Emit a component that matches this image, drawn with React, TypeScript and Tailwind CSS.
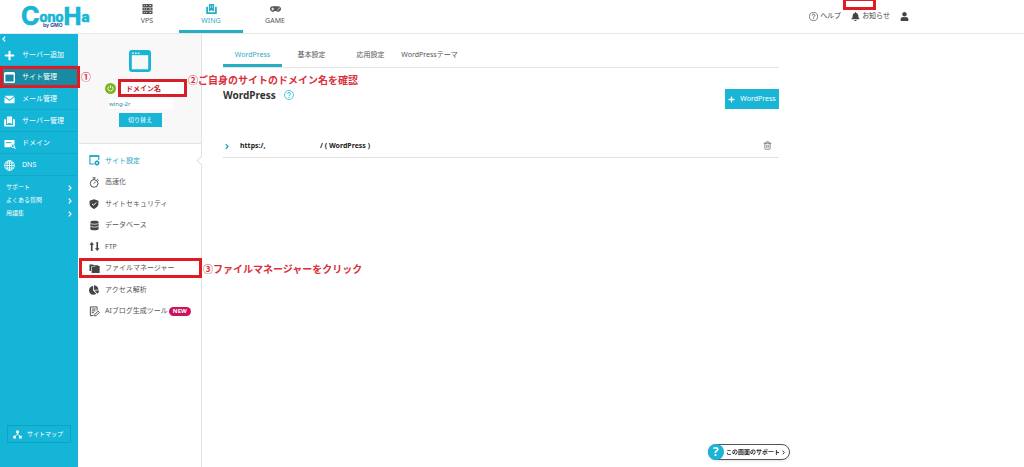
import type { ReactNode } from "react";
import { Trash2 } from "lucide-react";
import { FaBell, FaChartPie, FaGamepad, FaPlus, FaUser } from "react-icons/fa";

type IconProps = { className?: string };

const WindowIcon = ({ className }: IconProps) => (
  <svg viewBox="0 0 22 22" className={className} aria-hidden="true">
    <rect x="1.4" y="1.4" width="19.2" height="19.2" rx="1.6" fill="none" stroke="currentColor" strokeWidth="2.8" />
    <path d="M2 2h18v3.2H2z" fill="currentColor" />
    <path d="M3.2 2.4h1.6V4H3.2zM6 2.4h1.6V4H6zM8.8 2.4h1.6V4H8.8z" fill="#e8f6f9" />
  </svg>
);

const ServerIcon = ({ className }: IconProps) => (
  <svg viewBox="0 0 11 11" className={className} aria-hidden="true">
    <path d="M0 0h11v3.2H0zM0 3.9h11v3.2H0zM0 7.8h11V11H0z" fill="currentColor" />
    <path d="M1.5 1.2h1v1h-1zM4 1.2h1v1H4zM7.5 1.2h2v1h-2zM1.5 5h1v1h-1zM4 5h1v1H4zM7.5 5h2v1h-2zM1.5 8.9h1v1h-1zM4 8.9h1v1H4zM7.5 8.9h2v1h-2z" fill="#ddd" />
  </svg>
);

const WingIcon = ({ className }: IconProps) => (
  <svg viewBox="0 0 12 11" className={className} aria-hidden="true">
    <path d="M3.2 0h5.6v8.2L6 6.8 3.2 8.2zM.2 3h2v6.2h7.6V3h2v8H.2z" fill="currentColor" />
    <path d="M4.6 1.4h.7v3h-.7zM6.7 1.4h.7v3h-.7z" fill="#bfe8f1" />
  </svg>
);

const MailIcon = ({ className }: IconProps) => (
  <svg viewBox="0 0 12 9" className={className} aria-hidden="true">
    <path d="M.5.5h11L6 4.7zM.5 1.8 6 6l5.5-4.2v6.7H.5z" fill="currentColor" />
  </svg>
);

const DomainIcon = ({ className }: IconProps) => (
  <svg viewBox="0 0 12 10" className={className} aria-hidden="true">
    <path d="M.5 1h10v4.2a2.6 2.6 0 0 0-3.8 3H.5z" fill="currentColor" />
    <path d="M2 3.6h5.5" stroke="#14b5d7" strokeWidth="1" />
    <circle cx="8.8" cy="7" r="1.5" fill="none" stroke="currentColor" strokeWidth=".9" />
    <path d="m9.8 8 1.7 1.6" stroke="currentColor" strokeWidth="1.1" />
  </svg>
);

const GlobeIcon = ({ className }: IconProps) => (
  <svg viewBox="0 0 12 12" className={className} fill="none" stroke="currentColor" strokeWidth=".9" aria-hidden="true">
    <circle cx="6" cy="6" r="5.3" />
    <ellipse cx="6" cy="6" rx="2.6" ry="5.3" />
    <path d="M.7 6h10.6M6 .7v10.6M1.5 3.3h9M1.5 8.7h9" />
  </svg>
);

const SiteSettingIcon = ({ className }: IconProps) => (
  <svg viewBox="0 0 12 12" className={className} aria-hidden="true">
    <path d="M5.5 9.8H1V1h9.6v4.5" fill="none" stroke="currentColor" strokeWidth="1.2" />
    <path d="M.5.5h10.7V2H.5z" fill="currentColor" />
    <circle cx="8.7" cy="8.7" r="1.7" fill="none" stroke="currentColor" strokeWidth="1.5" />
    <path d="M8.7 5.5v1.4M8.7 10.4v1.4M5.6 8.7H7M10.4 8.7h1.4M6.5 6.5l1 1M10 10l1 1M10.9 6.5l-1 1M7.4 10l-1 1" stroke="currentColor" strokeWidth="1" />
  </svg>
);

const StopwatchIcon = ({ className }: IconProps) => (
  <svg viewBox="0 0 12 12" className={className} fill="none" stroke="currentColor" strokeWidth="1" aria-hidden="true">
    <circle cx="5.6" cy="7" r="4.2" />
    <path d="M4 .9h3.2M5.6 1v1.8M5.4 7.2l2-2.2M9 2.3l1.6 1.5" />
  </svg>
);

const ShieldIcon = ({ className }: IconProps) => (
  <svg viewBox="0 0 12 12" className={className} aria-hidden="true">
    <path d="M6 .2 11.3 2v3.8c0 2.8-2.2 4.9-5.3 6.1C2.900 10.700.7 8.600.7 5.800V2z" fill="currentColor" />
    <path d="m3.5 5.7 1.9 1.9 3.3-3.5" fill="none" stroke="#fff" strokeWidth="1.2" />
  </svg>
);

const DatabaseIcon = ({ className }: IconProps) => (
  <svg viewBox="0 0 12 12" className={className} aria-hidden="true">
    <path d="M1.5 2.2c0-1.9 9-1.9 9 0v7.600c0 1.900-9 1.900-9 0z" fill="currentColor" />
    <path d="M1.5 3.6c1 1.4 8 1.4 9 0M1.5 6.7c1 1.4 8 1.4 9 0" fill="none" stroke="#fff" strokeWidth=".8" />
  </svg>
);

const FtpIcon = ({ className }: IconProps) => (
  <svg viewBox="0 0 12 12" className={className} aria-hidden="true">
    <path d="M3 1l2.500 3.200H3.900V11H2.100V4.200H.5zM9 11 6.500 7.800h1.600V1h1.800v6.800h1.600z" fill="currentColor" />
  </svg>
);

const FolderIcon = ({ className }: IconProps) => (
  <svg viewBox="0 0 12 12" className={className} aria-hidden="true">
    <path d="M.5 1.500h3.800l1 1H10v1.200H2.200v5H.5z" fill="currentColor" />
    <path d="M2.900 4.400h3.400l1-1h4.300V11H2.900z" fill="currentColor" />
  </svg>
);

const BlogIcon = ({ className }: IconProps) => (
  <svg viewBox="0 0 12 12" className={className} fill="none" stroke="currentColor" strokeWidth="1" aria-hidden="true">
    <path d="M5 10.500H1.500V1h7.300v4M3 3.300h4.300M3 5.300h4M3 7.300h2.500" />
    <path d="m6.200 9.300 3.700-3.700 1.400 1.400-3.700 3.700H6.200z" />
  </svg>
);

const SitemapIcon = ({ className }: IconProps) => (
  <svg viewBox="0 0 10 10" className={className} aria-hidden="true">
    <path d="M3.500.5h3v3h-3zM.3 6.500h3v3h-3zM6.700 6.500h3v3h-3z" fill="currentColor" />
    <path d="M5 3v2M5 4.800 2 7M5 4.800 8 7" stroke="currentColor" strokeWidth=".9" />
  </svg>
);

const HelpIcon = ({ className }: IconProps) => (
  <svg viewBox="0 0 12 12" className={className} fill="none" stroke="currentColor" aria-hidden="true">
    <circle cx="6" cy="6" r="5.4" strokeWidth=".9" />
    <path d="M4.300 4.700c0-2.200 3.500-2.200 3.500 0C7.800 5.800 6 5.900 6 7.300M6 8.300v1.100" strokeWidth="1.1" />
  </svg>
);

const Chevron = ({ className }: IconProps) => (
  <svg viewBox="0 0 4 6" className={className} fill="none" stroke="currentColor" strokeWidth="1.3" aria-hidden="true">
    <path d="M.8.6 3 3 .8 5.400" />
  </svg>
);

const Logo = () => (
  <svg
    viewBox="0 0 72 33"
    role="img"
    aria-label="ConoHa by GMO"
    className="h-[33px] w-[72px] font-['Inter','Noto_Sans',sans-serif] font-bold"
  >
    <text x="0" y="25" fontSize="25" fill="#19b5d5" stroke="#19b5d5" strokeWidth=".7">
      C
      <tspan dy="-3" fontSize="13">ono</tspan>
      <tspan dy="3" fontSize="24">H</tspan>
      <tspan dy="-3" fontSize="14">a</tspan>
    </text>
    <text x="22" y="27" fontSize="5" fill="#1d4f9c">by GMO</text>
  </svg>
);

// red frame drawn over the part being explained
const Frame = ({ className }: IconProps) => (
  <span className={`pointer-events-none absolute z-10 border-[#e01b26] ${className}`} />
);

const Note = ({ className, children }: { className: string; children: ReactNode }) => (
  <span className={`pointer-events-none absolute z-10 text-[10px] leading-3 font-bold whitespace-nowrap text-[#d9303a] ${className}`}>
    {children}
  </span>
);

const services = [
  { label: "VPS", icon: <ServerIcon className="h-[10px] w-[11px]" /> },
  { label: "WING", icon: <WingIcon className="h-[10px] w-[11px]" />, active: true },
  { label: "GAME", icon: <FaGamepad className="h-[10px] w-[11px]" /> },
];

const sideItems = [
  { label: "サーバー追加", icon: <FaPlus className="size-[11px]" /> },
  { label: "サイト管理", icon: <WindowIcon className="size-[11px]" />, active: true },
  { label: "メール管理", icon: <MailIcon className="h-[9px] w-[11px]" /> },
  { label: "サーバー管理", icon: <WingIcon className="h-[11px] w-[11px]" /> },
  { label: "ドメイン", icon: <DomainIcon className="h-[10px] w-3" /> },
  { label: "DNS", icon: <GlobeIcon className="size-[11px]" /> },
];

const sideLinks = ["サポート", "よくある質問", "用語集"];

const menuItems = [
  { label: "サイト設定", icon: <SiteSettingIcon className="size-[11px]" />, active: true },
  { label: "高速化", icon: <StopwatchIcon className="size-[11px]" /> },
  { label: "サイトセキュリティ", icon: <ShieldIcon className="size-[10px]" /> },
  { label: "データベース", icon: <DatabaseIcon className="size-[11px]" /> },
  { label: "FTP", icon: <FtpIcon className="size-[11px]" /> },
  { label: "ファイルマネージャー", icon: <FolderIcon className="size-[11px]" />, framed: true },
  { label: "アクセス解析", icon: <FaChartPie className="size-[10px]" /> },
  { label: "AIブログ生成ツール", icon: <BlogIcon className="size-[11px]" />, isNew: true },
];

const tabs = ["WordPress", "基本設定", "応用設定", "WordPressテーマ"];

const Header = () => (
  <header className="relative flex h-[34px] border-b border-[#e8e8e8] bg-white">
    <a href="#" className="w-[115px] shrink-0 pl-[21px]">
      <Logo />
    </a>
    <nav className="flex">
      {services.map(({ label, icon, active }) => (
        <a
          key={label}
          href="#"
          className={`flex w-16 flex-col items-center border-b-[3px] pt-1 ${
            active ? "border-[#27adc4] text-[#27adc4]" : "border-transparent text-[#555]"
          }`}
        >
          {icon}
          <span className="mt-[2px] text-[7px] leading-[10px]">{label}</span>
        </a>
      ))}
    </nav>
    <div className="ml-auto flex items-center gap-[10px] pr-[115px] text-[7px] text-[#444]">
      <a href="#" className="flex items-center gap-[2px]">
        <HelpIcon className="size-[9px]" />
        ヘルプ
      </a>
      <a href="#" className="flex items-center gap-[2px]">
        <FaBell className="size-[9px]" />
        お知らせ
      </a>
      <a href="#" aria-label="アカウント">
        <FaUser className="size-[9px]" />
      </a>
    </div>
    <Frame className="-top-[2px] right-[148px] h-3 w-[33px] border-[3px]" />
  </header>
);

const Sidebar = () => (
  <aside className="flex w-[79px] shrink-0 flex-col border-r border-white bg-[#14b5d7] text-white">
    <button type="button" aria-label="閉じる" className="flex h-[10px] items-center pl-[2px]">
      <Chevron className="h-[6px] w-1 rotate-180" />
    </button>
    <nav>
      {sideItems.map(({ label, icon, active }) => (
        <a
          key={label}
          href="#"
          className={`relative flex h-[22px] items-center border-b border-[#12a8c8] pt-[2px] pl-1 text-[7px] ${
            active ? "bg-[#168ba3]" : ""
          }`}
        >
          <span className="flex w-[18px] items-center">{icon}</span>
          {label}
          {active && (
            <>
              <Frame className="top-0 left-0 h-[22px] w-20 border-[3px]" />
              <Note className="top-[5px] left-[81px]">①</Note>
            </>
          )}
        </a>
      ))}
    </nav>
    <ul className="mt-[5px] text-[6px]">
      {sideLinks.map((label) => (
        <li key={label}>
          <a href="#" className="flex h-[13px] items-center justify-between pr-[6px] pl-[6px]">
            {label}
            <Chevron className="h-[6px] w-1" />
          </a>
        </li>
      ))}
    </ul>
    <button
      type="button"
      className="mx-[7px] mt-auto mb-6 flex h-[18px] items-center gap-[5px] border border-[#0fa3c2] pl-[5px] text-[6px]"
    >
      <SitemapIcon className="size-[9px]" />
      サイトマップ
    </button>
  </aside>
);

const SitePanel = () => (
  <section className="w-[123px] shrink-0 border-r border-[#e2e2e2] bg-white">
    <div className="relative flex h-[110px] flex-col items-center border-b border-[#e2e2e2] bg-[#f8f8f8] pt-4">
      <WindowIcon className="size-[22px] text-[#19b5d5]" />
      <div className="mt-[7px] flex w-full items-center pl-[26px]">
        <svg viewBox="0 0 12 12" className="size-[11px]" aria-hidden="true">
          <circle cx="6" cy="6" r="6" fill="#7ab51d" />
          <path d="M4.200 3.800a2.800 2.800 0 1 0 3.600 0M6 2.600v3" fill="none" stroke="#fff" strokeWidth="1" />
        </svg>
        <span className="ml-[2px] flex h-[18px] w-[69px] items-center border-[3px] border-[#d51f2b] bg-white pt-[2px] pl-[5px] text-[7px] font-bold text-[#c9252d]">
          ドメイン名
        </span>
      </div>
      <Note className="top-10 left-[109px]">②ご自身のサイトのドメイン名を確認</Note>
      <p className="mt-[2px] w-full pl-[30px] text-[6px] leading-[10px] text-[#2b8ca3]">
        <span className="block w-16 bg-white">wing-2r</span>
      </p>
      <button type="button" className="mt-1 h-[14px] w-[43px] shrink-0 bg-[#19b5d5] text-[6px] leading-[14px] text-white">
        切り替え
      </button>
    </div>
    <nav className="grid h-[178px] grid-rows-8 pt-[6px]">
      {menuItems.map(({ label, icon, active, framed, isNew }) => (
        <a key={label} href="#" className="relative flex items-center pl-[10px]">
          <span className={`flex w-4 items-center ${active ? "text-[#19a5c5]" : "text-[#444]"}`}>{icon}</span>
          <span className={`text-[7px] whitespace-nowrap ${active ? "text-[#19a5c5]" : "text-[#555]"}`}>{label}</span>
          {active && (
            <span className="absolute -right-1 size-[7px] rotate-45 border-b border-l border-[#e2e2e2] bg-white" />
          )}
          {isNew && (
            <span className="ml-px rounded-full bg-[#c9145c] px-1 text-[6px] leading-[9px] font-bold text-white">NEW</span>
          )}
          {framed && (
            <>
              <Frame className="top-0 left-0 h-5 w-[123px] border-[3px]" />
              <Note className="top-[5px] left-[124px]">③ファイルマネージャーをクリック</Note>
            </>
          )}
        </a>
      ))}
    </nav>
  </section>
);

const Content = () => (
  <main className="min-w-0 flex-1 pl-[21px]">
    <div className="max-w-[556px]">
      <nav className="flex h-[34px] border-b border-[#e5e5e5] text-[7px]">
        {tabs.map((label, i) => (
          <a
            key={label}
            href="#"
            className={`flex min-w-[59px] items-center justify-center border-b-[3px] pt-3 whitespace-nowrap ${
              i === 0 ? "border-[#27adc4] text-[#27adc4]" : "border-transparent text-[#555]"
            }`}
          >
            {label}
          </a>
        ))}
      </nav>
      <div className="mt-[21px] flex h-5 items-start justify-between">
        <h1 className="flex items-center gap-2 text-[10px] leading-3 font-bold text-[#333]">
          WordPress
          <HelpIcon className="size-[10px] text-[#19b5d5]" />
        </h1>
        <button type="button" className="flex h-5 w-[54px] items-center justify-center gap-[5px] bg-[#19b5d5] text-[7px] text-white">
          <FaPlus className="size-[7px] shrink-0" />
          WordPress
        </button>
      </div>
      <div className="mt-[27px] flex h-[22px] items-center border-b border-[#e0e0e0] text-[7px] font-bold text-[#222]">
        <button type="button" aria-label="開く" className="w-[17px] pl-[2px] text-[#19a5c5]">
          <Chevron className="h-[7px] w-1" />
        </button>
        <span className="w-20">https:/,</span>
        <span>/ ( WordPress )</span>
        <button type="button" aria-label="削除" className="mr-[7px] ml-auto pb-[2px] text-[#666]">
          <Trash2 className="size-[9px]" />
        </button>
      </div>
    </div>
  </main>
);

export default function App() {
  return (
    <div
      lang="ja"
      className="relative flex min-h-screen flex-col bg-white font-['Noto_Sans','Noto_Sans_CJK_JP',sans-serif]"
    >
      <Header />
      <div className="flex flex-1">
        <Sidebar />
        <SitePanel />
        <Content />
      </div>
      <button
        type="button"
        className="fixed right-[234px] bottom-[7px] flex h-4 items-center gap-[2px] rounded-full border border-[#555] bg-white pr-1 text-[6px] font-bold text-[#222] shadow"
      >
        <span className="-ml-px flex size-4 items-center justify-center rounded-full bg-[#19b5d5] text-[12px] leading-4 text-white">
          ?
        </span>
        この画面のサポート
        <Chevron className="h-[5px] w-[3px]" />
      </button>
    </div>
  );
}
